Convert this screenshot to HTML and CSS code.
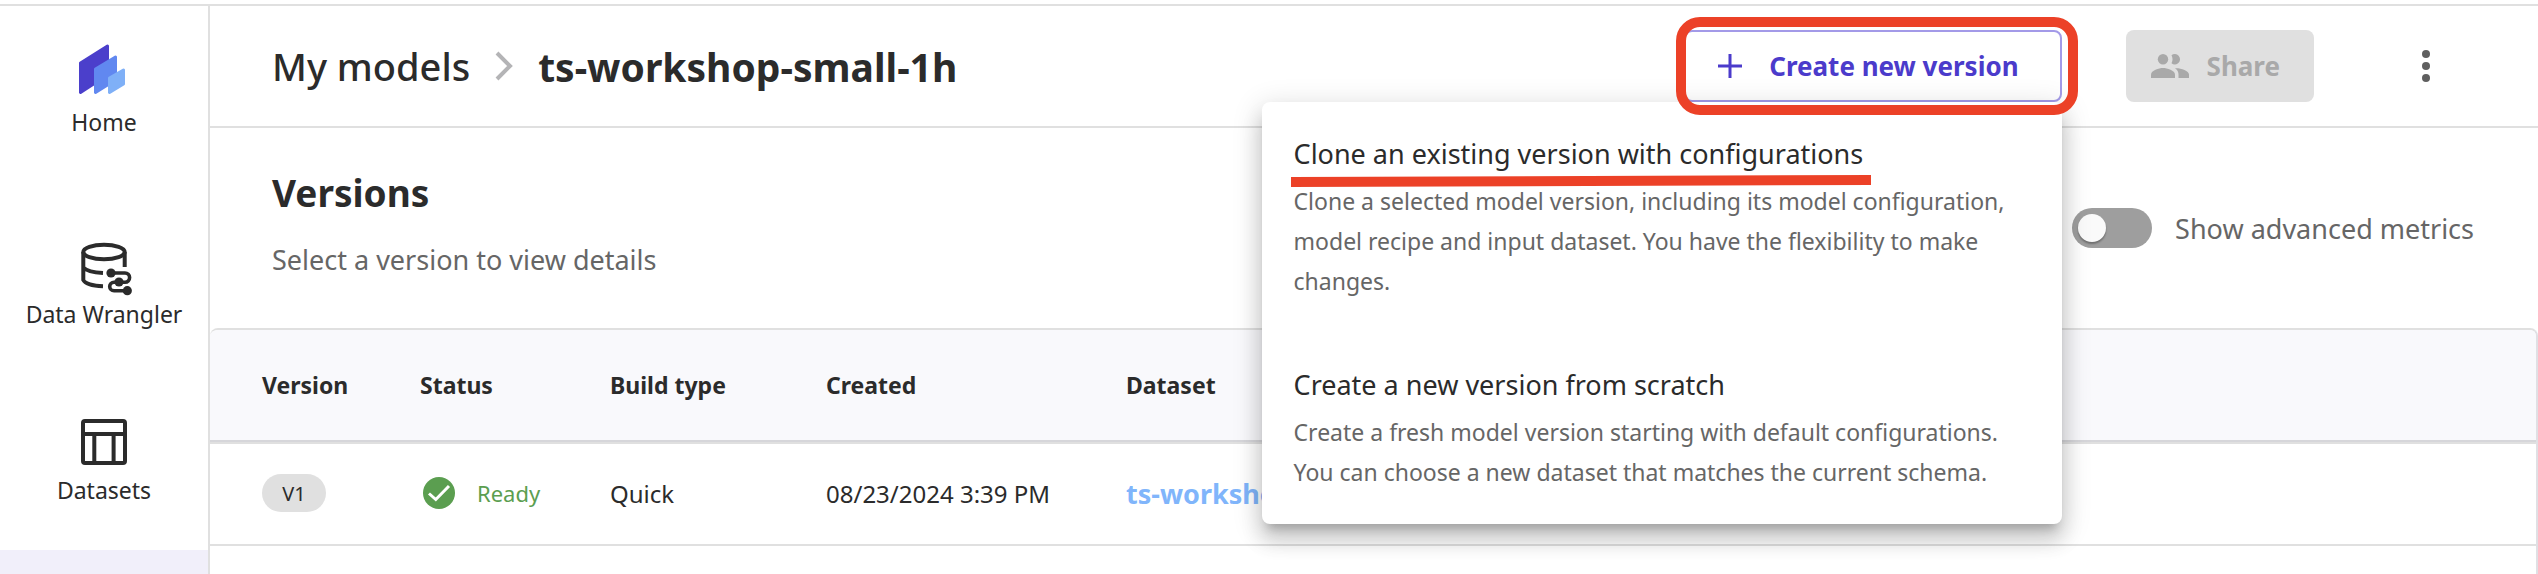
FILE: index.html
```html
<!DOCTYPE html>
<html lang="en">
<head>
<meta charset="utf-8">
<title>My models - ts-workshop-small-1h</title>
<link rel="stylesheet" href="styles.css">
</head>
<body>
<div class="app">
  <nav class="sidebar" aria-label="Main">
    <a class="nav-item nav-home" href="#home">
      <svg class="nav-icon" viewBox="0 0 64 64" aria-hidden="true">
        <g stroke-width="3" stroke-linejoin="round">
          <path d="M8.500 21 35.500 4V33L8.500 50.500Z" fill="#4b3fcb" stroke="#4b3fcb"/>
          <path d="M23.500 27 43.500 15V38L23.500 50.500Z" fill="#6188f0" stroke="#6188f0"/>
          <path d="M37.500 36 51.500 28V42L37.500 50.500Z" fill="#7fb0f7" stroke="#7fb0f7"/>
        </g>
      </svg>
      <span class="nav-label">Home</span>
    </a>
    <a class="nav-item" href="#data-wrangler">
      <svg class="nav-icon" viewBox="0 0 64 64" fill="none" stroke="#2b2b2b" stroke-width="4" aria-hidden="true">
        <ellipse cx="32" cy="18" rx="20.700" ry="7.300"/>
        <path d="M11.300 18V46C13 49.500 21 52 31 52.300M11.300 33.500C14 36.500 21 38.500 31 39M52.700 18V33"/>
        <path d="M39 39H53a4.600 4.600 0 0 1 0 9.200H42a4.300 4.300 0 0 0 0 8.600H55" stroke-width="3.600"/>
        <g fill="#2b2b2b" stroke="none"><circle cx="39" cy="39" r="4.600"/><circle cx="47" cy="48" r="4.600"/><circle cx="55.300" cy="56.700" r="4.600"/></g>
      </svg>
      <span class="nav-label">Data Wrangler</span>
    </a>
    <a class="nav-item" href="#datasets">
      <svg class="nav-icon" viewBox="0 0 64 64" fill="none" stroke="#2b2b2b" stroke-width="4" aria-hidden="true">
        <rect x="11" y="11" width="42" height="42" rx="2"/>
        <path d="M11 24H53M22.300 24V53M41.600 24V53"/>
      </svg>
      <span class="nav-label">Datasets</span>
    </a>
    <a class="nav-item nav-active" href="#models" aria-label="My models"></a>
  </nav>

  <main class="main">
    <header class="topbar">
      <div class="breadcrumb">
        <a class="crumb" href="#models">My models</a>
        <svg class="chevron" viewBox="0 0 18 30" fill="none" stroke="#b4b4b6" stroke-width="4" aria-hidden="true"><path d="M2 2 15 15 2 28"/></svg>
        <h1 class="crumb-current">ts-workshop-small-1h</h1>
      </div>
      <div class="actions">
        <div class="create">
          <button class="btn btn-create" type="button" aria-haspopup="menu" aria-expanded="true">
            <svg class="plus" viewBox="0 0 24 24" fill="none" stroke="#4b3bcb" stroke-width="3" aria-hidden="true"><path d="M12 0V24M0 12H24"/></svg>
            Create new version
          </button>
          <div class="menu" role="menu">
            <button class="menu-item" type="button" role="menuitem">
              <span class="menu-title">Clone an existing version with configurations
                <svg class="underline" viewBox="0 0 580 14" preserveAspectRatio="none" aria-hidden="true"><path d="M0 3 580 1V11L0 13Z" fill="#ec4127"/></svg>
              </span>
              <span class="menu-text">Clone a selected model version, including its model configuration, model recipe and input dataset. You have the flexibility to make changes.</span>
            </button>
            <button class="menu-item" type="button" role="menuitem">
              <span class="menu-title">Create a new version from scratch</span>
              <span class="menu-text">Create a fresh model version starting with default configurations. You can choose a new dataset that matches the current schema.</span>
            </button>
          </div>
          <span class="highlight"></span>
        </div>
        <button class="btn btn-share" type="button" disabled>
          <svg class="people" viewBox="0 0 38 24" fill="#a9a9a9" aria-hidden="true">
            <circle cx="12" cy="5.200" r="5.200"/>
            <path d="M0 24V20.500C0 16.500 8 14 12 14S24 16.500 24 20.500V24Z"/>
            <path d="M20.500 1.200A5.200 5.200 0 1 1 20.500 9.200Q22.600 5.200 20.500 1.200Z"/>
            <path d="M24 14.200C29 13.700 38 16.500 38 20.500V24H27.500V20.500Q27.500 16.700 24 14.200Z"/>
          </svg>
          Share
        </button>
        <button class="kebab" type="button" aria-label="More options">
          <svg viewBox="0 0 8 32" fill="#5f5f5f" aria-hidden="true"><circle cx="4" cy="4" r="4"/><circle cx="4" cy="16" r="4"/><circle cx="4" cy="28" r="4"/></svg>
        </button>
      </div>
    </header>

    <section class="intro">
      <div class="intro-text">
        <h2 class="title">Versions</h2>
        <p class="subtitle">Select a version to view details</p>
      </div>
      <label class="toggle">
        <input class="switch" type="checkbox" role="switch">
        Show advanced metrics
      </label>
    </section>

    <div class="table-wrap">
      <table class="versions">
        <colgroup><col class="c-version"><col class="c-status"><col class="c-build"><col class="c-created"><col></colgroup>
        <thead>
          <tr><th scope="col">Version</th><th scope="col">Status</th><th scope="col">Build type</th><th scope="col">Created</th><th scope="col">Dataset</th></tr>
        </thead>
        <tbody>
          <tr>
            <td><span class="chip">V1</span></td>
            <td>
              <span class="status">
                <svg class="check" viewBox="0 0 32 32" aria-hidden="true"><circle cx="16" cy="16" r="16" fill="#5b9e50"/><path d="M6 16.500 12.800 22.500 26 9" fill="none" stroke="#fff" stroke-width="3"/></svg>
                Ready
              </span>
            </td>
            <td>Quick</td>
            <td>08/23/2024 3:39 PM</td>
            <td><a class="dataset" href="#dataset">ts-workshop</a></td>
          </tr>
        </tbody>
      </table>
    </div>
  </main>
</div>
</body>
</html>
```
FILE: styles.css
```css
* {
  box-sizing: border-box;
}

body {
  margin: 0;
  padding-top: 4px;
  height: 100vh;
  overflow: hidden;
  background: #fff;
  color: #2b2b2b;
  font-family: "Noto Sans", "Open Sans", sans-serif;
  font-size: 23px;
}

button {
  font-family: inherit;
  cursor: pointer;
}

a {
  color: inherit;
  text-decoration: none;
}

h1, h2, p {
  margin: 0;
}

svg {
  display: block;
}

.app {
  display: flex;
  height: 100%;
  border-top: 2px solid #e0e0e0;
}

/* Sidebar */
.sidebar {
  flex: none;
  display: flex;
  flex-direction: column;
  width: 210px;
  border-right: 2px solid #e0e0e0;
}

.nav-item {
  flex: none;
  display: flex;
  flex-direction: column;
  align-items: center;
  height: 176px;
  padding-top: 36px;
}

.nav-home {
  margin-bottom: 16px;
}

.nav-active {
  flex: 1;
  height: auto;
  padding: 0;
  background: #f1effa;
}

.nav-icon {
  width: 64px;
  height: 64px;
}

.nav-label {
  line-height: 32px;
}

/* Top bar */
.main {
  flex: 1;
  min-width: 0;
  display: flex;
  flex-direction: column;
}

.topbar {
  display: flex;
  align-items: center;
  justify-content: space-between;
  height: 122px;
  padding: 0 88px 0 62px;
  border-bottom: 2px solid #e0e0e0;
}

.breadcrumb {
  display: flex;
  align-items: center;
  gap: 25px;
  white-space: nowrap;
}

.crumb {
  font-size: 38px;
  font-weight: 500;
}

.crumb-current {
  font-size: 39px;
  font-weight: 700;
}

.chevron {
  width: 18px;
  height: 30px;
}

.actions {
  display: flex;
  align-items: center;
  gap: 64px;
}

.create {
  position: relative;
}

.btn {
  display: flex;
  align-items: center;
  height: 72px;
  border-radius: 8px;
  font-size: 26px;
  font-weight: 700;
  white-space: nowrap;
}

.btn-create {
  gap: 27px;
  padding: 0 41px 0 32px;
  border: 2px solid #a39ae8;
  background: #fff;
  color: #4b3bcb;
}

.plus {
  width: 24px;
  height: 24px;
}

.btn-share {
  gap: 18px;
  padding: 0 34px 0 25px;
  border: 0;
  background: #e0e0e0;
  color: #a9a9a9;
}

.people {
  width: 38px;
  height: 24px;
}

.kebab {
  display: flex;
  align-items: center;
  justify-content: center;
  width: 48px;
  height: 48px;
  margin-left: 24px;
  padding: 0;
  border: 0;
  background: none;
}

.kebab svg {
  width: 8px;
  height: 32px;
}

.highlight {
  position: absolute;
  z-index: 3;
  inset: -13px -16px -13px -8px;
  border: 10px solid #ec4127;
  border-radius: 24px;
  pointer-events: none;
}

/* Create menu */
.menu {
  position: absolute;
  z-index: 2;
  top: 100%;
  right: 0;
  width: 800px;
  border-radius: 8px;
  background: #fff;
  box-shadow: 0 10px 10px -6px rgba(0, 0, 0, .2), 0 16px 20px 2px rgba(0, 0, 0, .14), 0 6px 28px 4px rgba(0, 0, 0, .12);
}

.menu-item {
  display: flex;
  flex-direction: column;
  align-items: flex-start;
  gap: 7px;
  width: 100%;
  padding: 32px;
  border: 0;
  background: none;
  color: #2b2b2b;
  line-height: 40px;
  text-align: left;
}

.menu-title {
  position: relative;
  font-size: 27px;
}

.menu-text {
  color: #666;
  font-size: 23px;
}

.underline {
  position: absolute;
  top: 100%;
  left: -3px;
  width: 580px;
  height: 14px;
}

/* Intro */
.intro {
  display: flex;
  align-items: center;
  justify-content: space-between;
  padding: 0 64px 0 62px;
}

.intro-text {
  display: flex;
  flex-direction: column;
  gap: 25px;
  padding: 41px 0 50px;
}

.title {
  font-size: 37px;
  line-height: 48px;
}

.subtitle {
  color: #666;
  font-size: 27px;
  line-height: 36px;
}

.toggle {
  display: flex;
  align-items: center;
  gap: 23px;
  color: #666;
  font-size: 27px;
  white-space: nowrap;
}

.switch {
  appearance: none;
  display: flex;
  align-items: center;
  width: 80px;
  height: 40px;
  margin: 0;
  padding: 0 6px;
  border-radius: 20px;
  background: #9e9e9e;
}

.switch::before {
  content: "";
  width: 28px;
  height: 28px;
  border-radius: 50%;
  background: #fafafa;
  box-shadow: 0 2px 2px rgba(0, 0, 0, .3);
}

.switch:checked {
  justify-content: flex-end;
}

/* Versions table */
.table-wrap {
  flex: 1;
  overflow: hidden;
  border-top: 2px solid #e0e0e0;
  border-right: 2px solid #e0e0e4;
  border-radius: 8px 8px 0 0;
}

.versions {
  width: 100%;
  table-layout: fixed;
  border-collapse: separate;
  border-spacing: 0;
}

.c-version { width: 158px; }
.c-status { width: 190px; }
.c-build { width: 216px; }
.c-created { width: 300px; }

.versions th,
.versions td {
  padding: 0 0 0 52px;
  text-align: left;
  vertical-align: middle;
  white-space: nowrap;
}

.versions th {
  height: 112px;
  border-bottom: 2px solid #d6d6da;
  background: #f9f9fc;
  font-size: 23px;
  font-weight: 700;
}

.versions td {
  height: 104px;
  padding-bottom: 2px;
  border-top: 2px solid #e0e0e0;
  border-bottom: 2px solid #e0e0e0;
  font-size: 24px;
}

.chip {
  display: flex;
  align-items: center;
  justify-content: center;
  width: 64px;
  height: 38px;
  border-radius: 19px;
  background: #e0e0e0;
  font-size: 20px;
}

.status {
  display: flex;
  align-items: center;
  gap: 22px;
  padding-left: 3px;
  color: #5b9e50;
  font-size: 22px;
}

.check {
  width: 32px;
  height: 32px;
}

.dataset {
  color: #80b5fb;
  font-size: 27px;
  font-weight: 700;
}
```
